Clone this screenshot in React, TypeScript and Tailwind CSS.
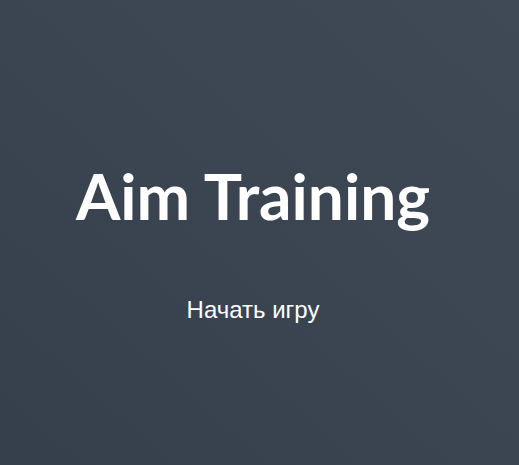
export default function App() {
  return (
    <div className="w-[519px] h-[465px] pr-[13px] bg-gradient-to-tr from-[#363f4c] to-[#404a57] flex flex-col items-center">
      <h1 className="mt-[156px] text-[64px] leading-[80px] text-white font-['Lato',sans-serif] font-bold">
        Aim Training
      </h1>
      <button className="mt-[60px] text-[24px] leading-[28px] text-white font-['Liberation_Sans',Arial,sans-serif] bg-transparent">
        Начать игру
      </button>
    </div>
  );
}
